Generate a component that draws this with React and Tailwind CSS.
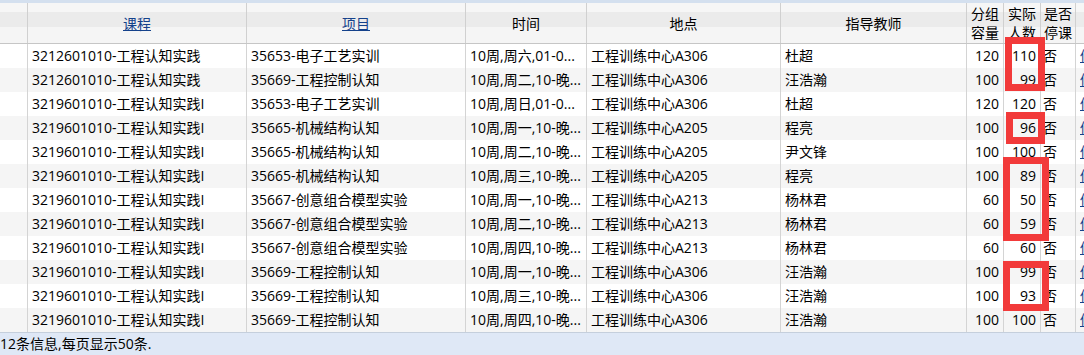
import React from 'react';

const font = { fontFamily: '"Open Sans", "Noto Sans CJK SC", sans-serif' };

const rows = [
  ['3212601010-工程认知实践', '35653-电子工艺实训', '10周,周六,01-0...', '工程训练中心A306', '杜超', '120', '110'],
  ['3212601010-工程认知实践', '35669-工程控制认知', '10周,周二,10-晚...', '工程训练中心A306', '汪浩瀚', '100', '99'],
  ['3219601010-工程认知实践I', '35653-电子工艺实训', '10周,周日,01-0...', '工程训练中心A306', '杜超', '120', '120'],
  ['3219601010-工程认知实践I', '35665-机械结构认知', '10周,周一,10-晚...', '工程训练中心A205', '程亮', '100', '96'],
  ['3219601010-工程认知实践I', '35665-机械结构认知', '10周,周二,10-晚...', '工程训练中心A205', '尹文锋', '100', '100'],
  ['3219601010-工程认知实践I', '35665-机械结构认知', '10周,周三,10-晚...', '工程训练中心A205', '程亮', '100', '89'],
  ['3219601010-工程认知实践I', '35667-创意组合模型实验', '10周,周一,10-晚...', '工程训练中心A213', '杨林君', '60', '50'],
  ['3219601010-工程认知实践I', '35667-创意组合模型实验', '10周,周二,10-晚...', '工程训练中心A213', '杨林君', '60', '59'],
  ['3219601010-工程认知实践I', '35667-创意组合模型实验', '10周,周四,10-晚...', '工程训练中心A213', '杨林君', '60', '60'],
  ['3219601010-工程认知实践I', '35669-工程控制认知', '10周,周一,10-晚...', '工程训练中心A306', '汪浩瀚', '100', '99'],
  ['3219601010-工程认知实践I', '35669-工程控制认知', '10周,周三,10-晚...', '工程训练中心A306', '汪浩瀚', '100', '93'],
  ['3219601010-工程认知实践I', '35669-工程控制认知', '10周,周四,10-晚...', '工程训练中心A306', '汪浩瀚', '100', '100'],
];

// column widths incl. right border
const W = ['w-[28px]', 'w-[219px]', 'w-[219px]', 'w-[121px]', 'w-[194px]', 'w-[186px]', 'w-[37px]', 'w-[37px]', 'w-[35px]', 'w-[60px]'];

function HeadCell({ w, children, className = '' }) {
  return (
    <div className={`${w} shrink-0 box-border border-r border-[#d0d0d0] flex items-center justify-center text-center ${className}`}>
      {children}
    </div>
  );
}

function Cell({ w, children, className = '' }) {
  return (
    <div className={`${w} shrink-0 box-border border-r border-[#d4d4d4] px-1 whitespace-nowrap overflow-hidden ${className}`}>
      {children}
    </div>
  );
}

export default function App() {
  return (
    <div className="relative w-[1084px] h-[355px] overflow-hidden bg-white text-[14px] text-black" style={font}>
      {/* header */}
      <div className="flex h-[44px] border-t-[3px] border-b border-t-[#d4e0ef] border-b-[#c6c6c6] bg-[linear-gradient(to_bottom,#f6f6f6_0px,#f6f6f6_9px,#ebebeb_9px,#ebebeb_24px,#f5f5f5_24px)] leading-[19px]">
        <HeadCell w={W[0]} />
        <HeadCell w={W[1]}><span className="underline text-[#15428b]">课程</span></HeadCell>
        <HeadCell w={W[2]}><span className="underline text-[#15428b]">项目</span></HeadCell>
        <HeadCell w={W[3]}>时间</HeadCell>
        <HeadCell w={W[4]}>地点</HeadCell>
        <HeadCell w={W[5]}>指导教师</HeadCell>
        <HeadCell w={W[6]}>分组<br />容量</HeadCell>
        <HeadCell w={W[7]}>实际<br />人数</HeadCell>
        <HeadCell w={W[8]}>是否<br />停课</HeadCell>
        <HeadCell w={W[9]} />
      </div>

      {/* body */}
      <div className="flex flex-col">
        {rows.map((r, i) => (
          <div key={i} className={`flex h-[24px] leading-[24px] ${i % 2 ? 'bg-[#f5f5f5]' : 'bg-white'}`}>
            <Cell w={W[0]} />
            <Cell w={W[1]}>{r[0]}</Cell>
            <Cell w={W[2]}>{r[1]}</Cell>
            <Cell w={W[3]}>{r[2]}</Cell>
            <Cell w={W[4]}>{r[3]}</Cell>
            <Cell w={W[5]}>{r[4]}</Cell>
            <Cell w={W[6]} className="text-right">{r[5]}</Cell>
            <Cell w={W[7]} className="text-right">{r[6]}</Cell>
            <Cell w={W[8]} className="!px-[2px]">否</Cell>
            <Cell w={W[9]}><span className="underline text-[#15428b]">修改</span></Cell>
          </div>
        ))}
      </div>

      {/* footer */}
      <div className="h-[23px] border-t border-[#c5cfdc] bg-[#dfe8f6] leading-[22px]">
        12条信息,每页显示50条.
      </div>

      {/* red annotation boxes */}
      <div className="absolute left-[1005px] top-[37px] w-[40px] h-[54px] border-[7px] border-[#f23a3a]" />
      <div className="absolute left-[1006px] top-[112px] w-[39px] h-[32px] border-[7px] border-[#f23a3a]" />
      <div className="absolute left-[1003px] top-[157px] w-[46px] h-[84px] border-[7px] border-[#f23a3a]" />
      <div className="absolute left-[1003px] top-[261px] w-[46px] h-[50px] border-[7px] border-[#f23a3a]" />
    </div>
  );
}
